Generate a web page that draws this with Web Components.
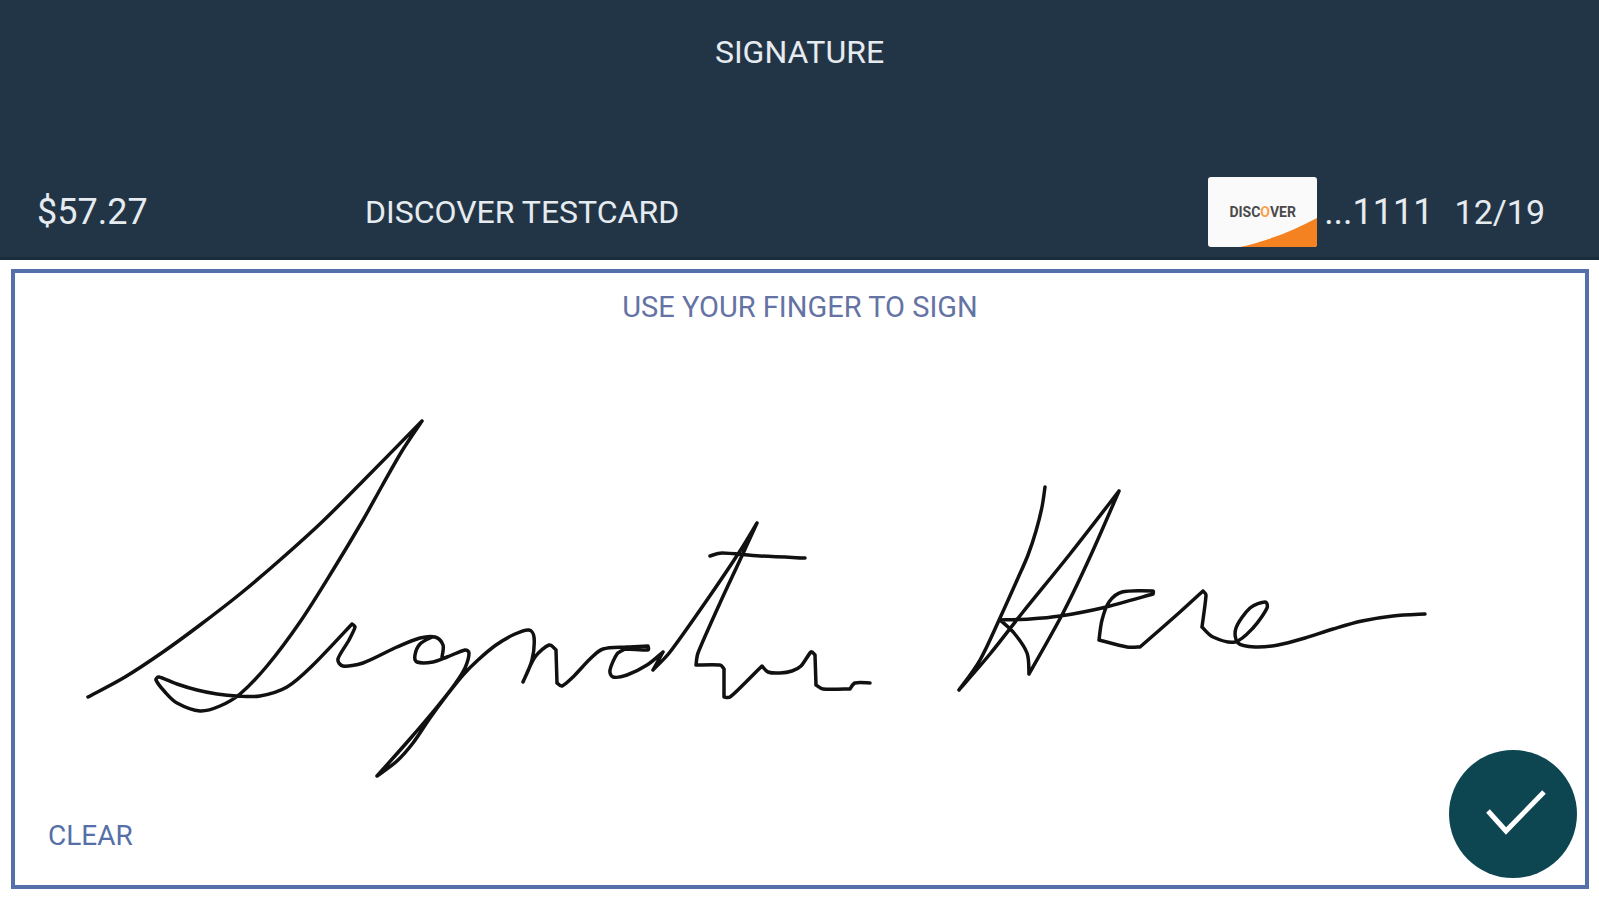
<!DOCTYPE html>
<html lang="en">
<head>
  <meta charset="utf-8">
  <meta name="viewport" content="width=device-width, initial-scale=1">
  <title>Signature</title>
  <style>
    body {
      margin: 0;
      background: #fff;
      font-family: Roboto, "Liberation Sans", sans-serif;
    }
  </style>
</head>
<body>
  <signature-screen></signature-screen>

  <script>
    class CardBrand extends HTMLElement {
      connectedCallback() {
        this.attachShadow({ mode: 'open' }).innerHTML = `
          <style>
            :host {
              position: relative;
              display: flex;
              align-items: center;
              justify-content: center;
              width: 109px;
              height: 70px;
              border-radius: 3px;
              overflow: hidden;
              background: #fafafa;
              color: #4a4a4c;
              font-size: 14px;
              font-weight: 700;
            }

            svg {
              position: absolute;
              right: 0;
              bottom: 0;
            }

            .accent {
              color: #f9a14a;
            }
          </style>
          <svg width="77" height="30" viewBox="0 0 77 30" aria-hidden="true">
            <path d="M0 30C27 24 53 14 77 1V30Z" fill="#f58220"/>
          </svg>
          <span>DISC<span class="accent">O</span>VER</span>`
      }
    }

    class PaymentHeader extends HTMLElement {
      connectedCallback() {
        this.attachShadow({ mode: 'open' }).innerHTML = `
          <style>
            :host {
              display: block;
              padding: 32px 54px 10px 37px;
              border-bottom: 3px solid #1b2d3c;
              background: #223547;
              color: #e6ebef;
            }

            h1 {
              margin: 0 -17px 105px 0;
              font-size: 32px;
              line-height: 40px;
              font-weight: 400;
              text-align: center;
            }

            .details {
              display: grid;
              grid-template-columns: 328px 1fr auto;
              align-items: center;
              font-size: 36px;
              line-height: 42px;
            }

            .name {
              font-size: 32px;
            }

            .card {
              display: flex;
              align-items: center;
              gap: 7px;
            }

            .expiry {
              margin-left: 14px;
              font-size: 34px;
            }
          </style>
          <h1><slot></slot></h1>
          <div class="details">
            <span>${this.getAttribute('amount')}</span>
            <span class="name">${this.getAttribute('name')}</span>
            <div class="card">
              <card-brand></card-brand>
              <span>...${this.getAttribute('last4')}</span>
              <span class="expiry">${this.getAttribute('expiry')}</span>
            </div>
          </div>`
      }
    }

    // Each stroke is a list of curves; a new curve starts where the pen turns sharply.
    const strokes = [
      [
        [88,697, 125,677, 163,652, 200,625, 240,594, 280,560, 322,522, 363,481, 422,421],
        [422,421, 402,451, 382,486, 363,520, 333,570, 300,622, 267,666, 240,694, 220,706, 200,711, 177,703, 165,692, 156,680, 159,677, 177,684, 197,690, 217,694, 237,696, 260,696, 287,687, 313,665, 352,624],
        [352,624, 355,627, 349,640, 338,659, 343,666, 363,663, 397,647, 420,638, 435,637, 443,645, 442,657],
        [432,637, 420,644, 415,655, 417,662, 433,662, 447,657, 465,650, 469,653, 465,668, 455,684, 437,707, 409,740, 377,776],
        [377,776, 397,761, 413,743, 430,718, 447,695, 463,675, 478,660, 496,645, 515,634, 529,630, 534,637, 532,660, 523,682],
        [523,682, 535,657, 549,645, 556,650],
        [556,650, 557,683],
        [557,683, 562,686, 573,677, 590,659, 603,649, 627,647, 648,646],
        [648,646, 648,650, 625,649],
        [625,649, 617,654, 610,670, 613,677, 627,675, 647,665, 663,652],
        [663,652, 653,670],
        [653,670, 670,652, 707,600, 740,551, 757,523],
        [757,523, 740,560, 720,603, 698,653, 696,665],
        [696,665, 720,665, 724,669],
        [724,669, 724,697],
        [724,697, 730,697, 745,683, 762,666],
        [762,666, 768,672, 780,673, 792,671, 801,666, 811,652, 815,655],
        [815,655, 816,685],
        [816,685, 823,689, 850,689],
        [850,689, 855,683, 870,683]
      ],
      [
        [710,556, 722,553, 760,556, 805,558]
      ],
      [
        [1045,487, 1042,507, 1036,531, 1028,555, 1018,578, 1000,618, 980,660, 959,690],
        [959,690, 990,654, 1023,612, 1070,554, 1119,491],
        [1119,491, 1090,557, 1063,613, 1029,674],
        [1029,674, 1027,653, 1014,633, 1000,620],
        [1000,620, 1030,619, 1060,616, 1102,608, 1153,594],
        [1153,594, 1153,591, 1122,592, 1109,602, 1102,620, 1099,640],
        [1099,640, 1127,647, 1140,647],
        [1140,647, 1180,612, 1203,591],
        [1203,591, 1206,595, 1202,627],
        [1202,627, 1213,637, 1235,642, 1253,628, 1267,608, 1265,602, 1250,608, 1236,628, 1238,643, 1255,647, 1278,645, 1305,638, 1333,629, 1362,621, 1393,616, 1425,614]
      ]
    ]

    // Catmull-Rom spline through the sampled points, written as bezier segments
    function curvePath(flat) {
      const points = []
      for (let i = 0; i < flat.length; i += 2) {
        points.push([flat[i], flat[i + 1]])
      }
      let d = ''
      for (let i = 0; i < points.length - 1; i++) {
        const p0 = points[i - 1] || points[i]
        const p1 = points[i]
        const p2 = points[i + 1]
        const p3 = points[i + 2] || p2
        // keep handles shorter than the segment when neighbours are far away
        const length = Math.hypot(p2[0] - p1[0], p2[1] - p1[1])
        const handle = (from, to) => {
          const x = (to[0] - from[0]) / 6
          const y = (to[1] - from[1]) / 6
          const scale = Math.min(1, length / 3 / (Math.hypot(x, y) || 1))
          return [x * scale, y * scale]
        }
        const a = handle(p0, p2)
        const b = handle(p1, p3)
        d += `C${p1[0] + a[0]} ${p1[1] + a[1]} ${p2[0] - b[0]} ${p2[1] - b[1]} ${p2[0]} ${p2[1]}`
      }
      return `M${points[0].join(' ')}${d}`
    }

    class SignaturePad extends HTMLElement {
      connectedCallback() {
        this.attachShadow({ mode: 'open' }).innerHTML = `
          <style>
            :host {
              position: relative;
              display: flex;
              flex-direction: column;
              justify-content: space-between;
              box-sizing: border-box;
              border: 4px solid #5570a9;
              color: #6473a3;
              font-size: 28px;
              line-height: 36px;
            }

            p {
              margin: 16px 0 0;
              font-size: 29px;
              text-align: center;
            }

            .ink {
              position: absolute;
              inset: 0;
              width: 100%;
              height: 100%;
              fill: none;
              stroke: #111;
              stroke-width: 3.500;
              stroke-linecap: round;
              stroke-linejoin: round;
            }

            .actions {
              position: relative;
              display: flex;
              align-items: flex-end;
              justify-content: space-between;
              padding: 0 8px 7px 33px;
            }

            button {
              border: 0;
              padding: 0;
              background: none;
              color: #566fa8;
              font: inherit;
              cursor: pointer;
            }

            .clear {
              margin-bottom: 24px;
            }

            .done {
              width: 128px;
              height: 128px;
              border-radius: 50%;
              background: #0d4651;
            }

            .done svg {
              display: block;
            }
          </style>
          <svg class="ink" viewBox="15 273 1570 612" role="img" aria-label="Signature"></svg>
          <p><slot></slot></p>
          <div class="actions">
            <button class="clear" type="button">CLEAR</button>
            <button class="done" type="button" aria-label="Done">
              <svg width="128" height="128" viewBox="0 0 128 128" aria-hidden="true">
                <path d="M39 61L57 81L95 42" fill="none" stroke="#fff" stroke-width="5"/>
              </svg>
            </button>
          </div>`

        this.ink = this.shadowRoot.querySelector('.ink')
        this.draw(strokes)
        this.shadowRoot.querySelector('.clear').addEventListener('click', () => this.draw([]))
        this.shadowRoot.querySelector('.done').addEventListener('click', () => {
          this.dispatchEvent(new Event('done'))
        })
      }

      draw(list) {
        this.ink.innerHTML = list.map(curves => `<path d="${curves.map(curvePath).join('')}"/>`).join('')
      }
    }

    class SignatureScreen extends HTMLElement {
      connectedCallback() {
        this.attachShadow({ mode: 'open' }).innerHTML = `
          <style>
            :host {
              display: flex;
              flex-direction: column;
              min-height: 100vh;
            }

            signature-pad {
              flex: 1;
              margin: 9px 10px 11px 11px;
            }
          </style>
          <payment-header amount="$57.27" name="DISCOVER TESTCARD" last4="1111" expiry="12/19">SIGNATURE</payment-header>
          <signature-pad>USE YOUR FINGER TO SIGN</signature-pad>`
      }
    }

    customElements.define('card-brand', CardBrand)
    customElements.define('payment-header', PaymentHeader)
    customElements.define('signature-pad', SignaturePad)
    customElements.define('signature-screen', SignatureScreen)
  </script>
</body>
</html>
